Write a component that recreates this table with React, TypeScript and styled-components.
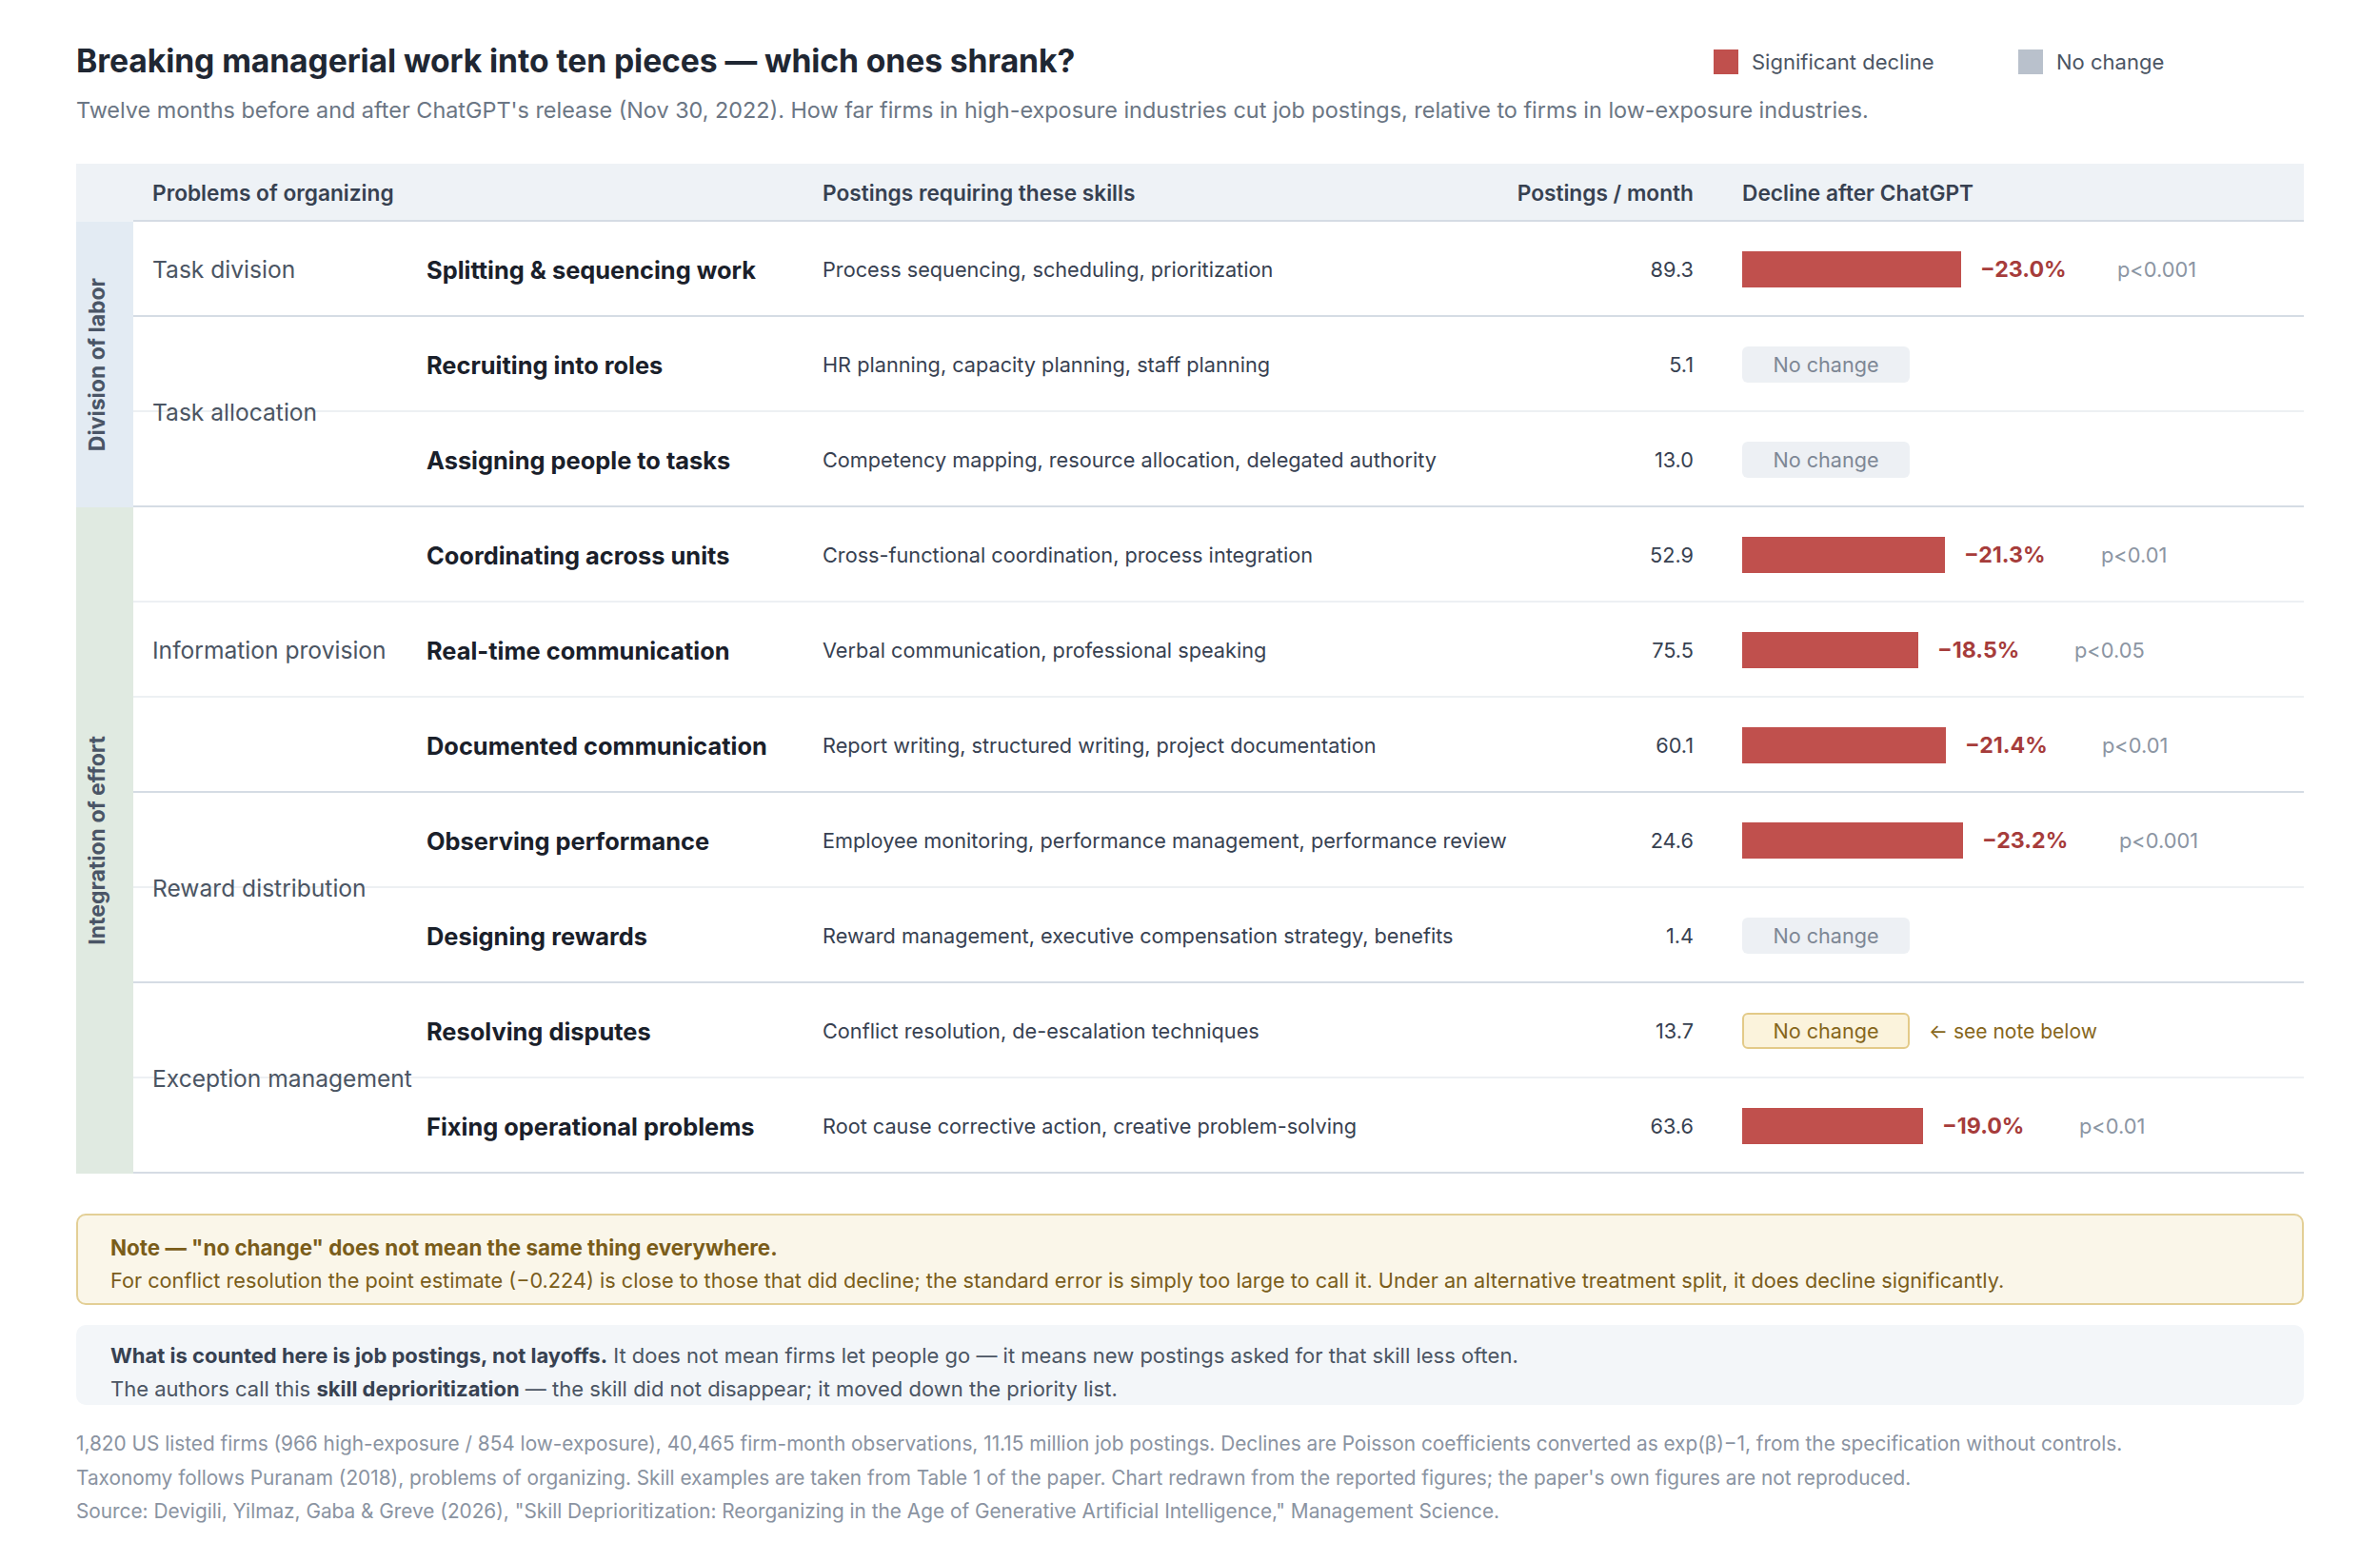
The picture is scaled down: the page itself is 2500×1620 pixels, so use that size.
import React from 'react';
import styled, { createGlobalStyle } from 'styled-components';

const GlobalStyle = createGlobalStyle`
  html, body { margin: 0; padding: 0; background: #ffffff; }
  body {
    font-family: Inter, "Liberation Sans", Arial, sans-serif;
    -webkit-font-smoothing: antialiased;
  }
`;

const COLS = '308px 416px minmax(0, 1fr) 250px 590px';

const Page = styled.div`
  width: 2500px;
  box-sizing: border-box;
  padding: 44px 80px 40px;
`;

const TitleRow = styled.div`
  display: flex;
  justify-content: space-between;
  align-items: center;
  height: 40px;
`;

const Title = styled.h1`
  margin: 0;
  font-size: 33.7px;
  line-height: 40px;
  font-weight: 700;
  color: #1f2733;
  letter-spacing: -0.1px;
`;

const Legend = styled.div`
  display: flex;
  gap: 20px;
  padding-top: 2px;
`;

const LegendItem = styled.div`
  width: 300px;
  display: flex;
  align-items: center;
  gap: 14px;
  font-size: 22px;
  color: #4b5563;
`;

const Swatch = styled.span<{ $c: string }>`
  width: 26px;
  height: 26px;
  flex: none;
  background: ${(p) => p.$c};
`;

const Subtitle = styled.p`
  margin: 15px 0 0;
  font-size: 23.4px;
  line-height: 34px;
  color: #6b7684;
`;

const Table = styled.div`
  margin-top: 39px;
`;

const HeaderBand = styled.div`
  display: flex;
  background: #eef2f6;
`;

const HeaderSpacer = styled.div`
  width: 60px;
  flex: none;
`;

const HeaderGrid = styled.div`
  flex: 1;
  display: grid;
  grid-template-columns: ${COLS};
  align-items: center;
  height: 57px;
  padding-top: 2px;
  border-bottom: 2px solid #d5dce4;
`;

const HeadCell = styled.div<{ $span?: number; $right?: boolean; $pl?: number }>`
  grid-column: span ${(p) => p.$span ?? 1};
  font-size: 22.7px;
  font-weight: 600;
  color: #374151;
  text-align: ${(p) => (p.$right ? 'right' : 'left')};
  padding-left: ${(p) => p.$pl ?? 0}px;
  padding-right: ${(p) => (p.$right ? 51 : 0)}px;
  white-space: nowrap;
`;

const Section = styled.div`
  display: flex;
`;

const GroupCell = styled.div<{ $bg: string }>`
  width: 60px;
  flex: none;
  box-sizing: border-box;
  padding-right: 16px;
  background: ${(p) => p.$bg};
  display: flex;
  align-items: center;
  justify-content: center;
`;

const GroupText = styled.span`
  writing-mode: vertical-rl;
  transform: rotate(180deg);
  font-size: 23px;
  font-weight: 700;
  line-height: 1;
  color: #4a5566;
  white-space: nowrap;
`;

const Problems = styled.div`
  flex: 1;
  display: flex;
  flex-direction: column;
`;

const ProblemBlock = styled.div`
  display: grid;
  grid-template-columns: 308px minmax(0, 1fr);
  border-bottom: 2px solid #d5dce4;
`;

const ProblemLabel = styled.div<{ $span: number }>`
  grid-column: 1;
  grid-row: 1 / span ${(p) => p.$span};
  align-self: center;
  padding-left: 20px;
  padding-top: 2px;
  font-size: 24.6px;
  color: #4b5563;
  white-space: nowrap;
  z-index: 1;
`;

const Row = styled.div<{ $row: number; $last: boolean }>`
  grid-column: 1 / -1;
  grid-row: ${(p) => p.$row};
  display: grid;
  grid-template-columns: ${COLS};
  align-items: center;
  height: 96px;
  padding-top: 2px;
  border-bottom: ${(p) => (p.$last ? 'none' : '2px solid #edf0f3')};
`;

const PieceName = styled.div`
  grid-column: 2;
  font-size: 25.4px;
  font-weight: 700;
  color: #1a202a;
  white-space: nowrap;
`;

const Skills = styled.div`
  font-size: 21.7px;
  color: #374151;
  white-space: nowrap;
`;

const Postings = styled.div`
  font-size: 21.7px;
  color: #374151;
  text-align: right;
  padding-right: 51px;
`;

const Decline = styled.div`
  display: flex;
  align-items: center;
`;

const Bar = styled.div`
  height: 38px;
  flex: none;
  background: #c0504d;
`;

const Pct = styled.span`
  width: 120px;
  flex: none;
  margin-left: 20px;
  font-size: 23.2px;
  font-weight: 700;
  color: #a63c3b;
  white-space: nowrap;
`;

const PValue = styled.span`
  margin-left: 24px;
  font-size: 21.8px;
  color: #8b95a3;
`;

const Pill = styled.span<{ $note?: boolean }>`
  width: 176px;
  height: 38px;
  box-sizing: border-box;
  display: inline-flex;
  align-items: center;
  justify-content: center;
  border-radius: 6px;
  font-size: 21.6px;
  background: ${(p) => (p.$note ? '#fbf3dc' : '#edf0f4')};
  color: ${(p) => (p.$note ? '#86661b' : '#7d8795')};
  border: ${(p) => (p.$note ? '2px solid #e3ca88' : 'none')};
`;

const NoteRef = styled.span`
  margin-left: 20px;
  font-size: 21px;
  color: #86661b;
`;

const NoteBox = styled.div`
  margin-top: 42px;
  background: #faf6e9;
  border: 2px solid #e3cf96;
  border-radius: 10px;
  padding: 16px 34px 6px;
  font-size: 21.7px;
  line-height: 35px;
  color: #7a5d1a;
`;

const NoteTitle = styled.div`
  font-weight: 700;
  font-size: 22.4px;
`;

const InfoBox = styled.div`
  margin-top: 21px;
  background: #f3f6f9;
  border-radius: 10px;
  padding: 15px 36px 0;
  height: 69px;
  font-size: 22px;
  line-height: 35px;
  color: #4b5563;
`;

const Strong = styled.strong`
  font-weight: 700;
  color: #374151;
`;

const Footnotes = styled.div`
  margin-top: 23px;
  font-size: 20.8px;
  line-height: 35.5px;
  color: #8a93a1;
`;

type Item = {
  piece: string;
  skills: string;
  posts: string;
  pct?: number;
  p?: string;
  note?: boolean;
};

type Problem = { label: string; rows: Item[] };
type SectionData = { name: string; bg: string; problems: Problem[] };

const DATA: SectionData[] = [
  {
    name: 'Division of labor',
    bg: '#e3ebf3',
    problems: [
      {
        label: 'Task division',
        rows: [
          {
            piece: 'Splitting & sequencing work',
            skills: 'Process sequencing, scheduling, prioritization',
            posts: '89.3',
            pct: 23.0,
            p: 'p<0.001',
          },
        ],
      },
      {
        label: 'Task allocation',
        rows: [
          {
            piece: 'Recruiting into roles',
            skills: 'HR planning, capacity planning, staff planning',
            posts: '5.1',
          },
          {
            piece: 'Assigning people to tasks',
            skills: 'Competency mapping, resource allocation, delegated authority',
            posts: '13.0',
          },
        ],
      },
    ],
  },
  {
    name: 'Integration of effort',
    bg: '#e0eae1',
    problems: [
      {
        label: 'Information provision',
        rows: [
          {
            piece: 'Coordinating across units',
            skills: 'Cross-functional coordination, process integration',
            posts: '52.9',
            pct: 21.3,
            p: 'p<0.01',
          },
          {
            piece: 'Real-time communication',
            skills: 'Verbal communication, professional speaking',
            posts: '75.5',
            pct: 18.5,
            p: 'p<0.05',
          },
          {
            piece: 'Documented communication',
            skills: 'Report writing, structured writing, project documentation',
            posts: '60.1',
            pct: 21.4,
            p: 'p<0.01',
          },
        ],
      },
      {
        label: 'Reward distribution',
        rows: [
          {
            piece: 'Observing performance',
            skills: 'Employee monitoring, performance management, performance review',
            posts: '24.6',
            pct: 23.2,
            p: 'p<0.001',
          },
          {
            piece: 'Designing rewards',
            skills: 'Reward management, executive compensation strategy, benefits',
            posts: '1.4',
          },
        ],
      },
      {
        label: 'Exception management',
        rows: [
          {
            piece: 'Resolving disputes',
            skills: 'Conflict resolution, de-escalation techniques',
            posts: '13.7',
            note: true,
          },
          {
            piece: 'Fixing operational problems',
            skills: 'Root cause corrective action, creative problem-solving',
            posts: '63.6',
            pct: 19.0,
            p: 'p<0.01',
          },
        ],
      },
    ],
  },
];

const DeclineCell: React.FC<{ item: Item }> = ({ item }) => {
  if (item.pct === undefined) {
    return (
      <Decline>
        <Pill $note={item.note}>No change</Pill>
        {item.note && <NoteRef>← see note below</NoteRef>}
      </Decline>
    );
  }
  return (
    <Decline>
      <Bar style={{ width: `${Math.round(item.pct * 10)}px` }} />
      <Pct>−{item.pct.toFixed(1)}%</Pct>
      <PValue>{item.p}</PValue>
    </Decline>
  );
};

export default function App() {
  return (
    <>
      <GlobalStyle />
      <Page>
        <TitleRow>
          <Title>Breaking managerial work into ten pieces — which ones shrank?</Title>
          <Legend>
            <LegendItem>
              <Swatch $c="#c0504d" />
              Significant decline
            </LegendItem>
            <LegendItem>
              <Swatch $c="#b9c1cc" />
              No change
            </LegendItem>
          </Legend>
        </TitleRow>
        <Subtitle>
          Twelve months before and after ChatGPT's release (Nov 30, 2022). How far firms in
          high-exposure industries cut job postings, relative to firms in low-exposure industries.
        </Subtitle>

        <Table>
          <HeaderBand>
            <HeaderSpacer />
            <HeaderGrid>
              <HeadCell $span={2} $pl={20}>
                Problems of organizing
              </HeadCell>
              <HeadCell>Postings requiring these skills</HeadCell>
              <HeadCell $right>Postings / month</HeadCell>
              <HeadCell>Decline after ChatGPT</HeadCell>
            </HeaderGrid>
          </HeaderBand>

          {DATA.map((section) => (
            <Section key={section.name}>
              <GroupCell $bg={section.bg}>
                <GroupText>{section.name}</GroupText>
              </GroupCell>
              <Problems>
                {section.problems.map((prob) => (
                  <ProblemBlock key={prob.label}>
                    {prob.rows.map((item, i) => (
                      <Row key={item.piece} $row={i + 1} $last={i === prob.rows.length - 1}>
                        <PieceName>{item.piece}</PieceName>
                        <Skills>{item.skills}</Skills>
                        <Postings>{item.posts}</Postings>
                        <DeclineCell item={item} />
                      </Row>
                    ))}
                    <ProblemLabel $span={prob.rows.length}>{prob.label}</ProblemLabel>
                  </ProblemBlock>
                ))}
              </Problems>
            </Section>
          ))}
        </Table>

        <NoteBox>
          <NoteTitle>Note — "no change" does not mean the same thing everywhere.</NoteTitle>
          <div>
            For conflict resolution the point estimate (−0.224) is close to those that did decline;
            the standard error is simply too large to call it. Under an alternative treatment split,
            it does decline significantly.
          </div>
        </NoteBox>

        <InfoBox>
          <div>
            <Strong>What is counted here is job postings, not layoffs.</Strong> It does not mean
            firms let people go — it means new postings asked for that skill less often.
          </div>
          <div>
            The authors call this <Strong>skill deprioritization</Strong> — the skill did not
            disappear; it moved down the priority list.
          </div>
        </InfoBox>

        <Footnotes>
          <div>
            1,820 US listed firms (966 high-exposure / 854 low-exposure), 40,465 firm-month
            observations, 11.15 million job postings. Declines are Poisson coefficients converted as
            exp(β)−1, from the specification without controls.
          </div>
          <div>
            Taxonomy follows Puranam (2018), problems of organizing. Skill examples are taken from
            Table 1 of the paper. Chart redrawn from the reported figures; the paper's own figures
            are not reproduced.
          </div>
          <div>
            Source: Devigili, Yilmaz, Gaba &amp; Greve (2026), "Skill Deprioritization: Reorganizing
            in the Age of Generative Artificial Intelligence," Management Science.
          </div>
        </Footnotes>
      </Page>
    </>
  );
}
